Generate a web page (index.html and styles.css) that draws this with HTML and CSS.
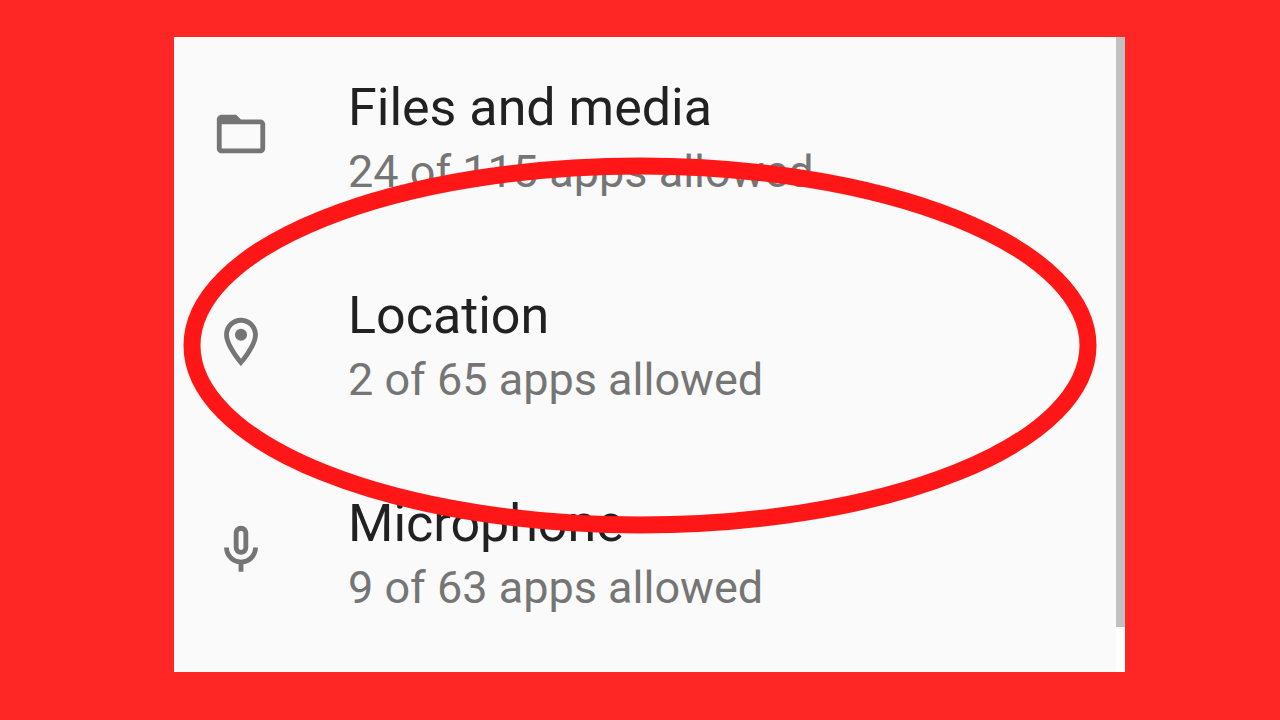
FILE: index.html
```html
<!DOCTYPE html>
<html lang="en">
<head>
<meta charset="utf-8">
<title>Permission manager</title>
<link rel="stylesheet" href="styles.css">
</head>
<body>
<main class="panel">
  <ul class="permissions">
    <li class="permission">
      <svg class="icon" viewBox="0 0 24 24" aria-hidden="true"><path d="M20 6h-8l-2-2H4c-1.100 0-2 .9-2 2v12c0 1.100.9 2 2 2h16c1.100 0 2-.9 2-2V8c0-1.100-.9-2-2-2zm0 12H4V8h16v10z"/></svg>
      <div class="details">
        <h2 class="name">Files and media</h2>
        <p class="summary">24 of 115 apps allowed</p>
      </div>
    </li>
    <li class="permission">
      <svg class="icon" viewBox="0 0 24 24" aria-hidden="true"><path d="M12 2C8.130 2 5 5.130 5 9c0 5.250 7 13 7 13s7-7.750 7-13c0-3.870-3.130-7-7-7zM7 9c0-2.760 2.240-5 5-5s5 2.240 5 5c0 2.880-2.880 7.190-5 9.880C9.920 16.210 7 11.850 7 9z"/><circle cx="12" cy="9" r="2.500"/></svg>
      <div class="details">
        <h2 class="name">Location</h2>
        <p class="summary">2 of 65 apps allowed</p>
      </div>
    </li>
    <li class="permission">
      <svg class="icon" viewBox="0 0 24 24" aria-hidden="true"><path d="M12 14c1.660 0 3-1.340 3-3V5c0-1.660-1.340-3-3-3S9 3.340 9 5v6c0 1.660 1.340 3 3 3zm-1-9c0-.55.45-1 1-1s1 .45 1 1v6c0 .55-.45 1-1 1s-1-.45-1-1V5zm6 6c0 2.760-2.240 5-5 5s-5-2.240-5-5H5c0 3.530 2.610 6.430 6 6.920V21h2v-3.080c3.390-.49 6-3.390 6-6.920h-2z"/></svg>
      <div class="details">
        <h2 class="name">Microphone</h2>
        <p class="summary">9 of 63 apps allowed</p>
      </div>
    </li>
  </ul>
  <div class="track"><div class="thumb"></div></div>
  <svg class="highlight" viewBox="0 0 914 378" preserveAspectRatio="none" aria-hidden="true"><ellipse cx="457" cy="189" rx="448" ry="180"/></svg>
</main>
</body>
</html>
```
FILE: styles.css
```css
* { box-sizing: border-box; }
body {
  margin: 0;
  min-height: 100vh;
  padding: 37px 155px 48px 174px;
  background: #ff2626;
  font-family: Roboto, "Liberation Sans", sans-serif;
  display: flex;
}
.panel {
  position: relative;
  flex: 1;
  display: flex;
  background: #fafafa;
}
.permissions {
  flex: 1;
  display: flex;
  flex-direction: column;
  gap: 80px;
  margin: 0;
  padding: 37px 0 50px 38px;
  list-style: none;
}
.permission {
  display: flex;
  gap: 78px;
}
.icon {
  flex: none;
  width: 58px;
  height: 58px;
  margin-top: 31px;
  fill: #757575;
}
.name {
  margin: 0;
  font-size: 52px;
  font-weight: 400;
  line-height: 68px;
  color: #212121;
}
.summary {
  margin: 0;
  font-size: 45px;
  line-height: 60px;
  color: #757575;
}
.track {
  display: flex;
  width: 9px;
  padding-bottom: 45px;
  background: #fff;
}
.thumb {
  flex: 1;
  background: #c1c1c1;
}
.highlight {
  position: absolute;
  left: 9px;
  top: 120px;
  width: calc(100% - 37px);
  height: 377px;
  fill: none;
  stroke: #ff1616;
  stroke-width: 17px;
}
```
